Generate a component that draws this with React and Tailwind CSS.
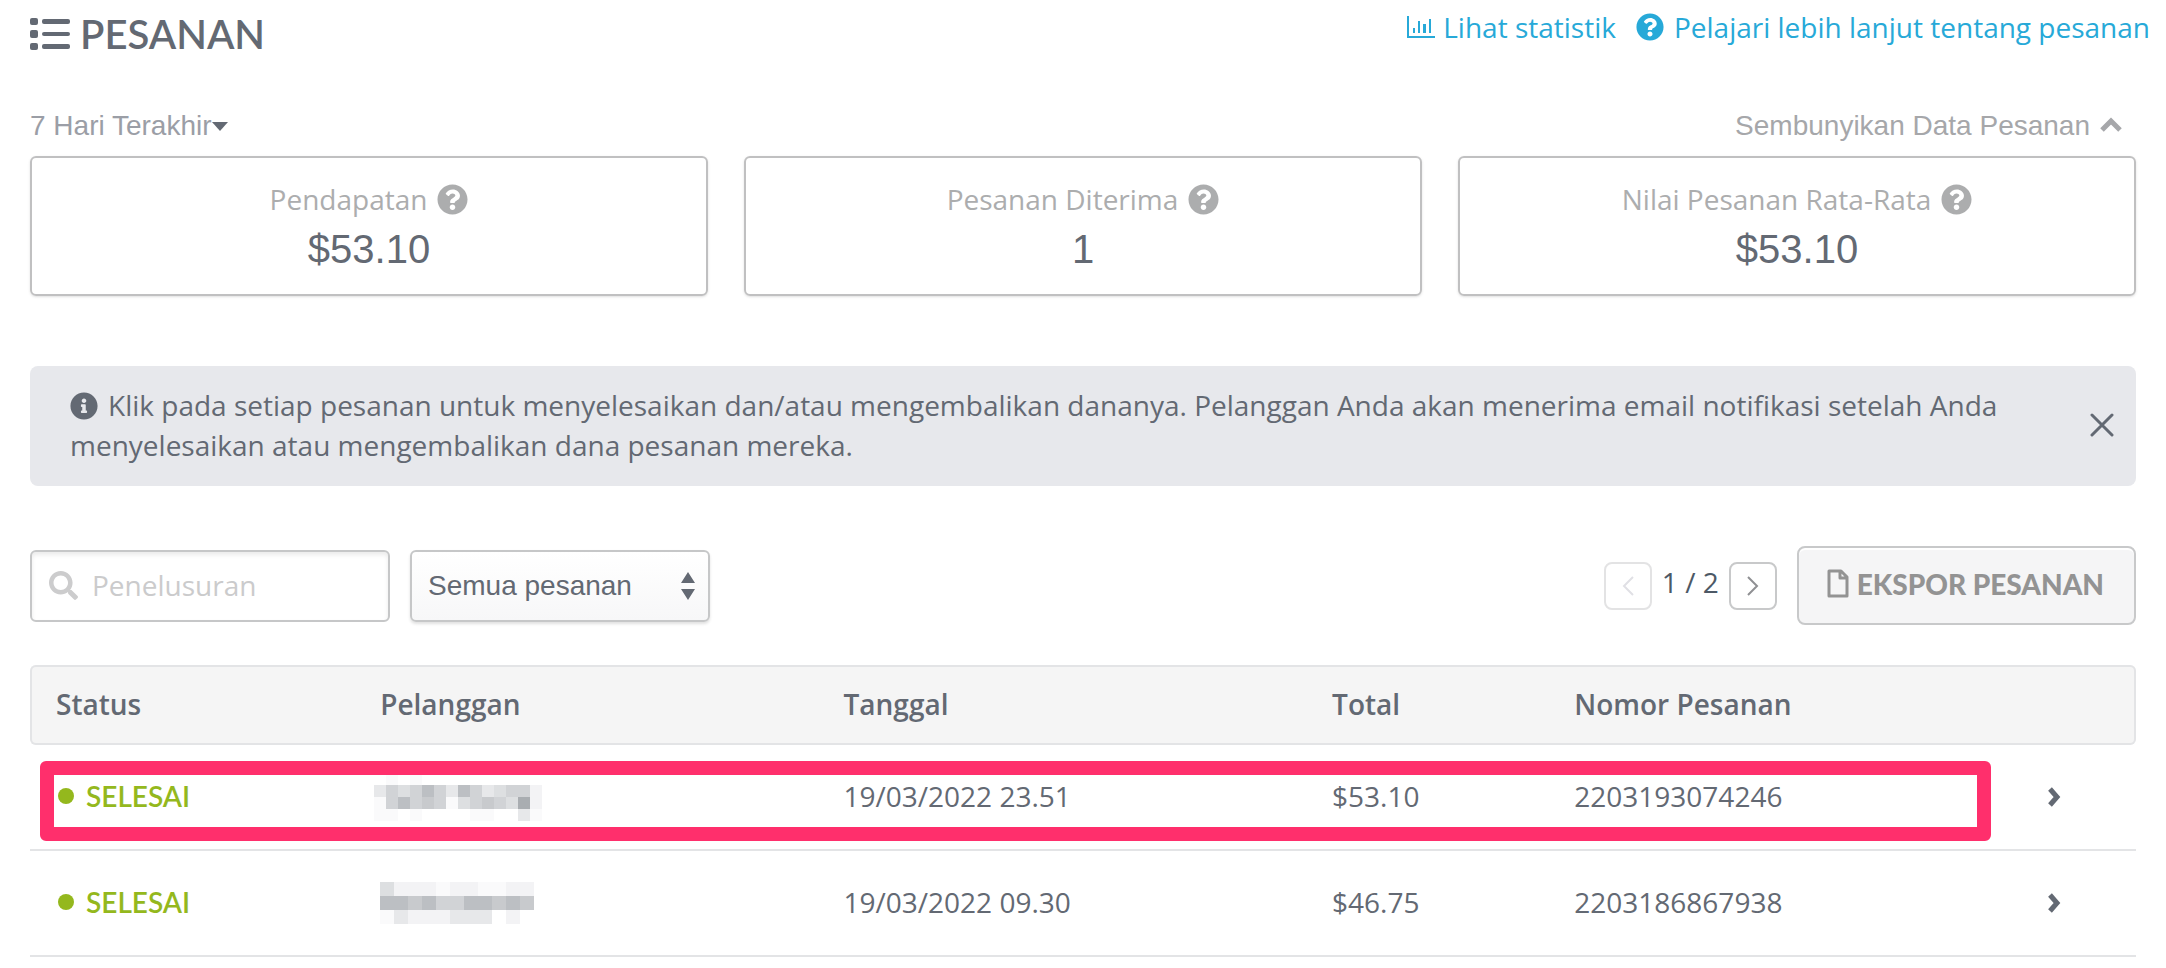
import React, { useState } from 'react'
import { FaInfoCircle, FaQuestionCircle, FaSearch } from 'react-icons/fa'

const stats = [
  { id: 'revenue', label: 'Pendapatan', value: '$53.10' },
  { id: 'received', label: 'Pesanan Diterima', value: '1' },
  { id: 'average', label: 'Nilai Pesanan Rata-Rata', value: '$53.10' },
]

const orders = [
  {
    id: '2203193074246',
    status: 'SELESAI',
    date: '19/03/2022 23.51',
    total: '$53.10',
    nameClass: 'pl-[22px]',
    mask: {
      cell: 12,
      rows: ['01010000000000', '35457537534552', '15756514565482', '11010000110031'],
    },
  },
  {
    id: '2203186867938',
    status: 'SELESAI',
    date: '19/03/2022 09.30',
    total: '$46.75',
    nameClass: 'pl-7',
    mask: {
      cell: 14,
      rows: ['42221221122', '77675577676', '13222333020'],
    },
  },
]

const shades = ['#ffffff', '#fafafb', '#f3f3f5', '#e7e8ea', '#dddfe1', '#d1d3d6', '#c8cacd', '#bcbfc3', '#a9adb1']

// Customer names are hidden behind a mosaic
function MaskedName({ cell, rows }) {
  return (
    <svg
      width={rows[0].length * cell}
      height={rows.length * cell}
      shapeRendering="crispEdges"
      role="img"
      aria-label="Pelanggan"
    >
      {rows.map((row, y) =>
        row.split('').map((shade, x) => (
          <rect key={`${x}-${y}`} x={x * cell} y={y * cell} width={cell} height={cell} fill={shades[shade]} />
        )),
      )}
    </svg>
  )
}

function ListIcon() {
  return (
    <svg width="40" height="34" viewBox="0 0 40 34" fill="currentColor" aria-hidden="true">
      <rect x="0" y="1" width="8" height="7" rx="2" />
      <rect x="0" y="13" width="8" height="8" rx="2" />
      <rect x="0" y="26" width="8" height="7" rx="2" />
      <rect x="12" y="2" width="28" height="5" rx="2" />
      <rect x="12" y="15" width="28" height="4" rx="2" />
      <rect x="12" y="27" width="28" height="5" rx="2" />
    </svg>
  )
}

function ChartIcon() {
  return (
    <svg width="28" height="22" viewBox="0 0 28 22" fill="currentColor" aria-hidden="true">
      <path d="M0 0h2v20h26v2H0z" />
      <path d="M6 12h2v5H6zM11 5h2v12h-2zM16 8h3v9h-3zM22 3h2v14h-2z" />
    </svg>
  )
}

export default function OrdersPage() {
  const [showStats, setShowStats] = useState(true)
  const [showNotice, setShowNotice] = useState(true)
  const [search, setSearch] = useState('')
  const [filter, setFilter] = useState('all')

  return (
    <div className="bg-white px-[30px] pb-2 font-['Open_Sans',sans-serif] text-[28px] leading-[40px] text-[#636973]">
      {/* Header */}
      <header className="flex items-start justify-between pt-[7px]">
        <h1 className="flex items-center gap-2.5 font-['Lato',sans-serif] text-[40px] font-semibold leading-[54px]">
          <ListIcon />
          PESANAN
        </h1>
        <nav className="-mr-[14px] flex gap-5 text-[#27a9d8]">
          <a href="#statistik" className="flex items-center gap-2">
            <ChartIcon />
            Lihat statistik
          </a>
          <a href="#bantuan" className="flex items-center gap-2.5">
            <FaQuestionCircle size={28} />
            Pelajari lebih lanjut tentang pesanan
          </a>
        </nav>
      </header>

      {/* Stats */}
      <div className="mt-[45px] flex items-center justify-between pb-2.5 pr-3.5 font-['Liberation_Sans',Arial,sans-serif] text-[#a6a7aa]">
        <button type="button" className="flex items-center text-[#9b9ea6]">
          7 Hari Terakhir
          <svg width="16" height="9" viewBox="0 0 16 9" fill="#636973" aria-hidden="true">
            <path d="M0 0h16L8 9z" />
          </svg>
        </button>
        <button type="button" onClick={() => setShowStats(!showStats)} className="flex items-center gap-2.5">
          Sembunyikan Data Pesanan
          <svg width="22" height="19" viewBox="0 0 22 19" fill="none" stroke="currentColor" strokeWidth="5" aria-hidden="true">
            <path d="M2 13l9-9 9 9" />
          </svg>
        </button>
      </div>
      {showStats && (
        <div className="grid grid-cols-3 gap-9">
          {stats.map((stat) => (
            <section key={stat.id} className="rounded-md border-2 border-[#c0c0c1] pb-3.5 pt-[21px] text-center shadow-sm">
              <h2 className="flex items-center justify-center gap-2.5 text-[#acadae]">
                {stat.label}
                <FaQuestionCircle size={31} />
              </h2>
              <p className="font-['Liberation_Sans',Arial,sans-serif] text-[40px] leading-[61px]">{stat.value}</p>
            </section>
          ))}
        </div>
      )}

      {/* Notice */}
      {showNotice && (
        <div className="mt-[70px] flex items-center justify-between rounded-lg bg-[#e7e8ec] pb-[21px] pl-10 pr-[22px] pt-[19px]">
          <p className="max-w-[1960px]">
            <FaInfoCircle size={28} className="mr-2.5 inline-block align-[-4px]" />
            Klik pada setiap pesanan untuk menyelesaikan dan/atau mengembalikan dananya. Pelanggan Anda akan menerima
            email notifikasi setelah Anda menyelesaikan atau mengembalikan dana pesanan mereka.
          </p>
          <button type="button" aria-label="Tutup" onClick={() => setShowNotice(false)}>
            <svg width="24" height="24" viewBox="0 0 24 24" stroke="currentColor" strokeWidth="3" strokeLinecap="round">
              <path d="M2 2l20 20M22 2L2 22" />
            </svg>
          </button>
        </div>
      )}

      {/* Toolbar */}
      <div className="mt-[60px] flex items-center justify-between">
        <div className="flex items-center gap-5">
          <label className="flex h-[72px] w-[360px] items-center gap-3.5 rounded-md border-2 border-[#c6c7c8] pl-[17px] shadow-[inset_0_3px_4px_#00000014]">
            <FaSearch size={29} className="shrink-0 text-[#cccccd]" />
            <input
              type="text"
              aria-label="Penelusuran"
              placeholder="Penelusuran"
              value={search}
              onChange={(e) => setSearch(e.target.value)}
              className="w-full min-w-0 pb-0.5 outline-none placeholder:text-[#cbcbcc]"
            />
          </label>
          <div className="relative">
            <select
              aria-label="Filter pesanan"
              value={filter}
              onChange={(e) => setFilter(e.target.value)}
              className="block h-[72px] w-[300px] appearance-none rounded-md border-2 border-[#c6c7c8] bg-linear-to-b from-white to-[#f7f7f8] pl-4 font-['Liberation_Sans',Arial,sans-serif] shadow-[0_2px_3px_#0000001f]"
            >
              <option value="all">Semua pesanan</option>
              <option value="done">Selesai</option>
            </select>
            <svg
              width="14"
              height="28"
              viewBox="0 0 14 28"
              fill="currentColor"
              className="pointer-events-none absolute right-[15px] top-[22px]"
              aria-hidden="true"
            >
              <path d="M7 0l7 11H0zM0 17h14L7 28z" />
            </svg>
          </div>
        </div>
        <div className="flex items-center">
          <div className="flex items-center gap-2.5">
            <button
              type="button"
              aria-label="Sebelumnya"
              disabled
              className="flex size-12 items-center justify-center rounded-lg border-2 border-[#e3e3e4] text-[#e0e0e5]"
            >
              <svg width="12" height="20" viewBox="0 0 12 20" fill="none" stroke="currentColor" strokeWidth="2">
                <path d="M11 1L2 10l9 9" />
              </svg>
            </button>
            <span className="pb-2 text-[#4d5966]">1 / 2</span>
            <button
              type="button"
              aria-label="Berikutnya"
              className="flex size-12 items-center justify-center rounded-lg border-2 border-[#c8c9ca] text-[#8f9093]"
            >
              <svg width="12" height="20" viewBox="0 0 12 20" fill="none" stroke="currentColor" strokeWidth="2">
                <path d="M1 1l9 9-9 9" />
              </svg>
            </button>
          </div>
          <button
            type="button"
            className="ml-5 flex h-[79px] items-center gap-2 rounded-lg border-2 border-[#c8c9ca] bg-[#f5f5f6] pb-1 pl-7 pr-[30px] font-['Lato',sans-serif] font-black text-[#939393] shadow-[inset_0_2px_0_#ffffff]"
          >
            <svg width="22" height="29" viewBox="0 0 22 29" fill="none" stroke="currentColor" strokeWidth="3" strokeLinejoin="round">
              <path d="M2 2h12l6 6v19H2zM13 2v7h7" />
            </svg>
            EKSPOR PESANAN
          </button>
        </div>
      </div>

      {/* Orders */}
      <div className="relative mt-10">
        <table className="w-full table-fixed border-separate border-spacing-0 text-left">
          <colgroup>
            <col className="w-[15.3%]" />
            <col className="w-[22%]" />
            <col className="w-[23.2%]" />
            <col className="w-[11.5%]" />
            <col className="w-[22%]" />
            <col />
          </colgroup>
          <thead>
            <tr className="h-20 bg-[#f5f5f5]">
              <th className="rounded-l-md border-y-2 border-l-2 border-[#e3e4e6] pb-0.5 pl-6 font-semibold">Status</th>
              <th className="border-y-2 border-[#e3e4e6] pb-0.5 pl-7 font-semibold">Pelanggan</th>
              <th className="border-y-2 border-[#e3e4e6] pb-0.5 pl-7 font-semibold">Tanggal</th>
              <th className="border-y-2 border-[#e3e4e6] pb-0.5 pl-7 font-semibold">Total</th>
              <th className="border-y-2 border-[#e3e4e6] pb-0.5 pl-7 font-semibold">Nomor Pesanan</th>
              <th className="rounded-r-md border-y-2 border-r-2 border-[#e3e4e6]" aria-label="Detail" />
            </tr>
          </thead>
          <tbody>
            {orders.map((order) => (
              <tr key={order.id} className="h-[106px]">
                <td className="border-b-2 border-[#e3e4e6] pb-0.5 pl-7">
                  <span className="flex items-center gap-3 font-['Lato',sans-serif] font-semibold text-[#94b81d]">
                    <span className="size-4 rounded-full bg-[#94b81d]" />
                    {order.status}
                  </span>
                </td>
                <td className={`border-b-2 border-[#e3e4e6] ${order.nameClass}`}>
                  <MaskedName cell={order.mask.cell} rows={order.mask.rows} />
                </td>
                <td className="border-b-2 border-[#e3e4e6] pb-0.5 pl-7">{order.date}</td>
                <td className="border-b-2 border-[#e3e4e6] pb-0.5 pl-7">{order.total}</td>
                <td className="border-b-2 border-[#e3e4e6] pb-0.5 pl-7">{order.id}</td>
                <td className="border-b-2 border-[#e3e4e6] pl-[38px]">
                  <button type="button" aria-label="Buka pesanan" className="block">
                    <svg width="13" height="20" viewBox="0 0 13 20" fill="none" stroke="currentColor" strokeWidth="5">
                      <path d="M2 2l7 8-7 8" />
                    </svg>
                  </button>
                </td>
              </tr>
            ))}
          </tbody>
        </table>
        {/* Highlight around the first order */}
        <div className="pointer-events-none absolute left-2.5 right-[145px] top-24 h-20 rounded-md border-14 border-[#ff2f6c]" />
      </div>
    </div>
  )
}
